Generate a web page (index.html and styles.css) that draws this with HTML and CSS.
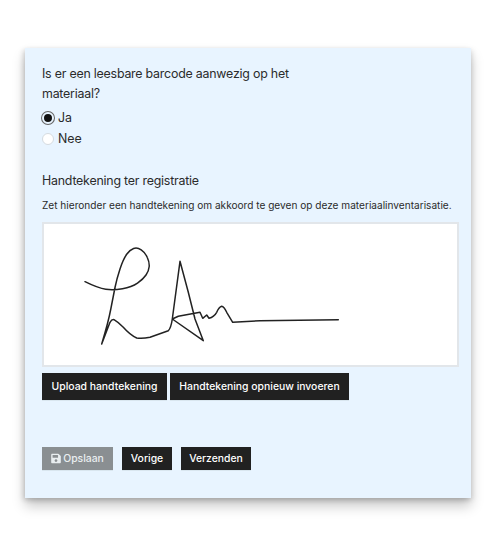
FILE: index.html
```html
<!DOCTYPE html>
<html lang="nl">
<head>
<meta charset="utf-8">
<title>Handtekening</title>
<link rel="stylesheet" href="styles.css">
</head>
<body>
<main class="card">
  <p class="question">Is er een leesbare barcode aanwezig op het materiaal?</p>
  <div class="options">
    <label class="option"><span class="radio radio-on"></span>Ja</label>
    <label class="option"><span class="radio"></span>Nee</label>
  </div>
  <h2 class="heading">Handtekening ter registratie</h2>
  <p class="hint">Zet hieronder een handtekening om akkoord te geven op deze materiaalinventarisatie.</p>
  <div class="sigbox">
    <svg class="sig" viewBox="44 225 413 140" aria-label="Handtekening">
      <path d="M85 282.700Q98.300 289.300 105.800 290.300Q113.300 291.300 122.500 289.800Q131.700 288.300 137.500 284.200Q143.300 280 146 276Q148.800 272 149.200 267.500Q149.500 263 147.200 258.200Q145 253.300 141.200 250.800Q137.300 248.300 133.600 249.500Q130 250.700 126.700 255.300Q123.300 260 120 270Q116.700 280 115 288.500Q113.300 297 110.800 310Q108.300 323.300 101.700 345L110 323.300Q112 320 114 320.700Q118 323 123.300 328.300Q130 336 136.700 339Q142 340 150 338.300L168.300 331.700Q171 329 172.300 320L180 262.300L188.300 293.300L195 320L203.300 341.700L172.300 320L178.300 317.300L200 313.300L202.700 319.300L206.700 316L209 319.300Q214 318 216.700 313.300Q219 308 221.700 307.300Q224 307.500 226.700 313.300L232.700 323.300L260 321.700L338.300 320.700"/>
    </svg>
  </div>
  <div class="sigactions">
    <button class="btn btn-upload" type="button">Upload handtekening</button>
    <button class="btn btn-redo" type="button">Handtekening opnieuw invoeren</button>
  </div>
  <div class="formactions">
    <button class="btn btn-small btn-muted" type="button">
      <svg class="icon" viewBox="0 0 448 512" aria-hidden="true"><path d="M433.900 129.900l-83.900-83.900A48 48 0 0 0 316.100 32H48C21.500 32 0 53.500 0 80v352c0 26.500 21.500 48 48 48h352c26.500 0 48-21.500 48-48V163.900a48 48 0 0 0-14.100-34zM224 416c-35.300 0-64-28.700-64-64 0-35.300 28.700-64 64-64s64 28.700 64 64c0 35.300-28.700 64-64 64zm96-304.500V212c0 6.600-5.400 12-12 12H76c-6.600 0-12-5.400-12-12V108c0-6.600 5.400-12 12-12h228.500c3.200 0 6.200 1.300 8.500 3.500l3.500 3.500c2.200 2.200 3.500 5.300 3.500 8.500z"/></svg>Opslaan</button>
    <button class="btn btn-small btn-prev" type="button">Vorige</button>
    <button class="btn btn-small btn-send" type="button">Verzenden</button>
  </div>
</main>
</body>
</html>
```

FILE: styles.css
```css
* { box-sizing: border-box; }
html, body { margin: 0; background: #fff; }
body {
  padding: 48px 29px 47px 25px;
  font-family: "Inter", "Liberation Sans", sans-serif;
  color: #212121;
}
.card {
  height: 450px;
  background: #e8f4ff;
  padding: 16px 12px 0 17px;
  box-shadow: 0 8px 12px rgba(0, 0, 0, 0.22), -2px 2px 5px rgba(0, 0, 0, 0.14), 2px 2px 5px rgba(0, 0, 0, 0.08);
}
.question {
  margin: 0;
  width: 270px;
  font-size: 12.400px;
  letter-spacing: -0.220px;
  line-height: 20px;
  color: #2b2b2b;
}
.options { margin-top: 3px; }
.option {
  display: flex;
  align-items: center;
  gap: 4px;
  height: 21px;
  font-size: 12.400px;
  color: #2b2b2b;
}
.radio {
  width: 12px;
  height: 12px;
  border-radius: 50%;
  background: #fff;
  border: 1px solid #d5dbe0;
}
.radio-on {
  background: #111;
  border: 2px solid #e8f4ff;
  box-shadow: 0 0 0 1px #666;
}
.heading {
  margin: 22px 0 0;
  font-size: 12.400px;
  letter-spacing: -0.220px;
  line-height: 20px;
  font-weight: 400;
  color: #2b2b2b;
}
.hint {
  margin: 6px 0 0;
  font-size: 10.100px;
  line-height: 16px;
  color: #2b2b2b;
  white-space: nowrap;
}
.sigbox {
  margin-top: 9px;
  height: 145px;
  background: #fff;
  border: 2px solid #e2e6ea;
}
.sig { display: block; width: 413px; height: 140px; }
.sig path {
  fill: none;
  stroke: #222;
  stroke-width: 1.500;
  stroke-linecap: round;
  stroke-linejoin: round;
}
.sigactions { display: flex; gap: 3px; margin-top: 6px; }
.btn {
  display: inline-flex;
  align-items: center;
  justify-content: center;
  padding: 0;
  border: 1px solid #d9e6ef;
  border-width: 0 0 1px 0;
  background: #212121;
  color: #fff;
  font-family: inherit;
  font-size: 10.400px;
  font-weight: 500;
  height: 28px;
  white-space: nowrap;
}
.btn-upload { width: 125px; }
.btn-redo { width: 179px; }
.formactions { display: flex; align-items: flex-end; margin-top: 46px; }
.btn-small { height: 24px; }
.btn-muted {
  width: 71px;
  background: #8a8f92;
  color: #e9eef0;
  gap: 2px;
}
.btn-prev { width: 50px; margin-left: 9px; height: 24px; }
.btn-send { width: 70px; margin-left: 9px; height: 24px; }
.icon { width: 10px; height: 11px; fill: currentColor; }
```
